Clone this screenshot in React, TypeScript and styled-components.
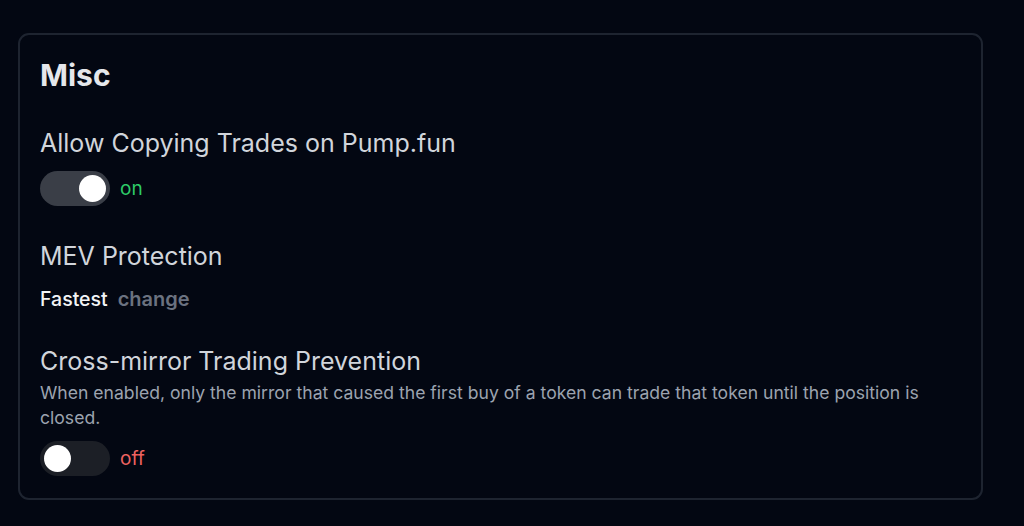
import styled, { createGlobalStyle } from "styled-components";

const GlobalStyle = createGlobalStyle`
  html, body {
    margin: 0;
    padding: 0;
    background: #030712;
    font-family: Inter, "Noto Sans", sans-serif;
  }
  * { box-sizing: border-box; }
`;

const Page = styled.div`
  padding: 33px 41px 26px 18px;
  min-height: 526px;
`;

const Card = styled.section`
  border: 2px solid #1e2430;
  border-radius: 11px;
  background: #030712;
  padding: 22px 20px 22px 20px;
  display: flex;
  flex-direction: column;
`;

const Title = styled.h2`
  margin: 0 0 33px 0;
  font-size: 30px;
  line-height: 36px;
  font-weight: 700;
  color: #e5e7eb;
`;

const Setting = styled.div`
  display: flex;
  flex-direction: column;
  margin-bottom: 33px;
  &:last-child { margin-bottom: 0; }
`;

const Label = styled.div`
  font-size: 25px;
  line-height: 34px;
  color: #d1d5db;
`;

const Description = styled.p`
  margin: 2px 0 0 0;
  font-size: 17.6px;
  line-height: 25px;
  color: #9ca3af;
`;

const Row = styled.div<{ $gap?: number }>`
  display: flex;
  align-items: center;
  gap: 10px;
  margin-top: ${(p) => p.$gap ?? 10}px;
`;

const Track = styled.button<{ $on: boolean }>`
  position: relative;
  width: 70px;
  height: 35px;
  border-radius: 18px;
  border: none;
  padding: 0;
  background: ${(p) => (p.$on ? "#3a3e47" : "#1c1f26")};
  cursor: pointer;
`;

const Knob = styled.span<{ $on: boolean }>`
  position: absolute;
  top: 4px;
  left: ${(p) => (p.$on ? "39px" : "4px")};
  width: 27px;
  height: 27px;
  border-radius: 50%;
  background: #ffffff;
`;

const State = styled.span<{ $on: boolean }>`
  font-size: 19px;
  color: ${(p) => (p.$on ? "#2ecc68" : "#ee6260")};
`;

const Value = styled.span`
  font-size: 19.5px;
  line-height: 24px;
  font-weight: 500;
  color: #f3f4f6;
`;

const Change = styled.button`
  background: none;
  border: none;
  padding: 0;
  font-family: inherit;
  font-size: 20px;
  line-height: 24px;
  font-weight: 600;
  color: #6b7280;
  cursor: pointer;
`;

const Toggle = ({ on }: { on: boolean }) => (
  <Row $gap={11}>
    <Track $on={on}>
      <Knob $on={on} />
    </Track>
    <State $on={on}>{on ? "on" : "off"}</State>
  </Row>
);

export default function App() {
  return (
    <>
      <GlobalStyle />
      <Page>
        <Card>
          <Title>Misc</Title>
          <Setting>
            <Label>Allow Copying Trades on Pump.fun</Label>
            <Toggle on />
          </Setting>
          <Setting>
            <Label>MEV Protection</Label>
            <Row $gap={14}>
              <Value>Fastest</Value>
              <Change>change</Change>
            </Row>
          </Setting>
          <Setting>
            <Label>Cross-mirror Trading Prevention</Label>
            <Description>
              When enabled, only the mirror that caused the first buy of a token can trade that token until the position is closed.
            </Description>
            <Toggle on={false} />
          </Setting>
        </Card>
      </Page>
    </>
  );
}
